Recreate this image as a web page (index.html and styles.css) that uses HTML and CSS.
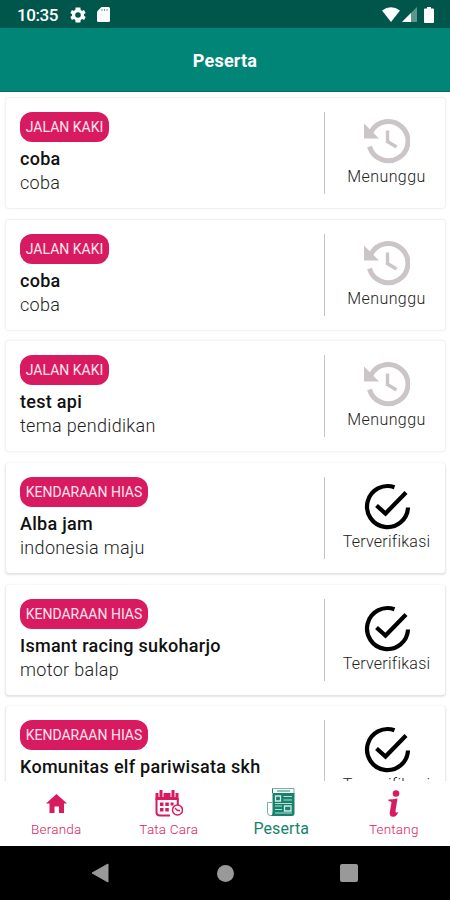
FILE: index.html
```html
<!DOCTYPE html>
<html lang="id">
<head>
<meta charset="utf-8">
<title>Peserta</title>
<link rel="stylesheet" href="styles.css">
</head>
<body>
<svg class="defs" width="0" height="0">
  <symbol id="history" viewBox="0 0 48 48">
    <path d="M9 15A19.600 19.600 0 1 1 7.500 29.500" fill="none" stroke="currentColor" stroke-width="5"/>
    <path d="M2 6.500V21.500H17Z" fill="currentColor"/>
    <path d="M25.500 13.500V24.500L34.500 30" fill="none" stroke="currentColor" stroke-width="3.400"/>
  </symbol>
  <symbol id="verified" viewBox="0 0 48 48">
    <path d="M31.500 4.300A20.500 20.500 0 1 0 45 24.500" fill="none" stroke="currentColor" stroke-width="4.200"/>
    <path d="M13.500 22.500L22.500 30.500L43 9.500" fill="none" stroke="currentColor" stroke-width="4.200"/>
  </symbol>
</svg>
<div class="phone">
  <div class="status">
    <span class="time">10:35</span>
    <svg class="gear" width="16" height="16" viewBox="2 2 20 20"><path fill="#fff" fill-rule="evenodd" d="M19.400 13c.1-.7.1-1.300 0-2l2.100-1.600-2-3.500-2.500 1c-.5-.4-1.100-.7-1.700-1L15 2.500H9l-.4 3.400c-.6.3-1.100.6-1.700 1l-2.500-1-2 3.500L4.600 11c-.1.700-.1 1.300 0 2l-2.200 1.600 2 3.500 2.500-1c.6.400 1.100.7 1.700 1l.4 3.400h6l.4-3.400c.6-.3 1.100-.6 1.700-1l2.500 1 2-3.500zM12 15.500a3.500 3.500 0 1 1 0-7 3.500 3.500 0 0 1 0 7z"/></svg>
    <svg class="sd" width="13" height="15" viewBox="0 0 13 15"><path fill="#fff" d="M4.500 0H11.500Q13 0 13 1.500V13.500Q13 15 11.500 15H1.500Q0 15 0 13.500V4.500Z"/><path d="M5 2v2M7.500 2v2M10 2v2" stroke="#6d9c94" stroke-width="1"/></svg>
    <svg class="wifi" width="18" height="15" viewBox="0 0 18 15"><path fill="#fff" d="M0 3.500Q9-3 18 3.500L9 15Z"/></svg>
    <svg class="signal" width="15" height="15" viewBox="0 0 15 15"><path fill="#5b968c" d="M0 15L15 0V15Z"/><path fill="#fff" d="M0 15L9 6V15Z"/></svg>
    <svg class="battery" width="10" height="16" viewBox="0 0 10 16"><path fill="#fff" d="M3 0H7V1.500H9Q10 1.500 10 2.500V15Q10 16 9 16H1Q0 16 0 15V2.500Q0 1.500 1 1.500H3Z"/></svg>
  </div>
  <header class="bar">Peserta</header>
  <main class="list">
    <article class="card"><div class="info"><span class="tag">JALAN KAKI</span><b class="name">coba</b><span class="desc">coba</span></div><div class="state"><svg class="wait"><use href="#history"/></svg><span>Menunggu</span></div></article>
    <article class="card"><div class="info"><span class="tag">JALAN KAKI</span><b class="name">coba</b><span class="desc">coba</span></div><div class="state"><svg class="wait"><use href="#history"/></svg><span>Menunggu</span></div></article>
    <article class="card"><div class="info"><span class="tag">JALAN KAKI</span><b class="name">test api</b><span class="desc">tema pendidikan</span></div><div class="state"><svg class="wait"><use href="#history"/></svg><span>Menunggu</span></div></article>
    <article class="card low"><div class="info"><span class="tag wide">KENDARAAN HIAS</span><b class="name">Alba jam</b><span class="desc">indonesia maju</span></div><div class="state done"><svg><use href="#verified"/></svg><span>Terverifikasi</span></div></article>
    <article class="card low"><div class="info"><span class="tag wide">KENDARAAN HIAS</span><b class="name">Ismant racing sukoharjo</b><span class="desc">motor balap</span></div><div class="state done"><svg><use href="#verified"/></svg><span>Terverifikasi</span></div></article>
    <article class="card low"><div class="info"><span class="tag wide">KENDARAAN HIAS</span><b class="name">Komunitas elf pariwisata skh</b><span class="desc"></span></div><div class="state done"><svg><use href="#verified"/></svg><span>Terverifikasi</span></div></article>
  </main>
  <nav class="tabs">
    <a class="tab"><svg width="28" height="30" viewBox="0 0 28 30"><path fill="currentColor" d="M14.500 6L25 15.500H22V25H17V18.500H12.500V25H7.500V15.500H4Z"/></svg><span>Beranda</span></a>
    <a class="tab"><svg width="28" height="30" viewBox="0 0 28 30"><path fill="currentColor" d="M0.500 5H23.500V12H0.500Z"/><path d="M1.500 10V24Q1.500 27.500 5 27.500H15M22.800 10V17" fill="none" stroke="currentColor" stroke-width="2"/><path d="M6 3V9M18 3V9" stroke="#fff" stroke-width="5"/><path d="M6 2V9.500M18 2V9.500" stroke="currentColor" stroke-width="3"/><path fill="currentColor" d="M5 14.500h3.500v3.500H5zM10.300 14.500h3.500v3.500h-3.500zM15.600 14.500h3v3h-3zM5 20h3.500v3.500H5zM10.300 20h3.500v3.500h-3.500z"/><circle cx="22.500" cy="22" r="5" fill="#fff" stroke="currentColor" stroke-width="1.500"/><path d="M20 20L22.500 22.500H25" fill="none" stroke="currentColor" stroke-width="1.300"/></svg><span>Tata Cara</span></a>
    <a class="tab active"><svg width="28" height="30" viewBox="0 0 28 30"><path fill="none" stroke="currentColor" stroke-opacity=".6" d="M5 14.500H.5V24Q.5 27.500 3 27.500H8M5.500 .5H27V6"/><path fill="currentColor" d="M5.500 5H27.500V25Q27.500 28 25 28H4Q5.500 27 5.500 24Z"/><path d="M5.500 .5V5M10 3H23" stroke="currentColor"/><path d="M16.500 8.500H25M16.500 12H25M8 18H15M8 21.500H15M8 25H25M8 15.500H25" stroke="#b9dcd3"/><path fill="none" stroke="#d5ebe6" stroke-width="1.300" d="M8.500 8h5v5h-5zM17.500 18h6.500v5h-6.500z"/></svg><span>Peserta</span></a>
    <a class="tab"><svg width="28" height="30" viewBox="0 0 28 30"><circle cx="16" cy="5.500" r="3.300" fill="currentColor"/><path fill="currentColor" d="M8.500 11.500Q12.500 11.500 17.500 10.500L15.500 23Q15.200 25.500 18.500 24Q16.500 29 13 28.800Q9 28.500 9.800 24L11.500 14.500Q11.500 13.200 8.500 13Z"/></svg><span>Tentang</span></a>
  </nav>
  <footer class="system">
    <svg width="18" height="20" viewBox="0 0 18 20"><path d="M17 1V19L1 10Z" fill="#999" stroke="#999" stroke-linejoin="round"/></svg>
    <i class="home"></i><i class="recent"></i>
  </footer>
</div>
</body>
</html>
```
FILE: styles.css
```css
* { box-sizing: border-box; }
body { margin: 0; background: #fff; font-family: Roboto, "Liberation Sans", sans-serif; }
.defs { display: block; }
.phone { width: 450px; height: 900px; display: flex; flex-direction: column; overflow: hidden; }
.status { height: 28px; flex: none; background: #00564b; display: flex; align-items: center; padding: 1px 16px 0 17px; color: #fff; }
.time { font-size: 17px; font-weight: 500; width: 41px; letter-spacing: -.45px; }
.gear { margin-left: 12px; }
.sd { margin-left: 11px; }
.wifi { margin-left: auto; }
.signal { margin-left: 2px; }
.battery { margin-left: 7px; }
.bar { height: 64px; flex: none; background: #018577; border-bottom: 1px solid #00705f; color: #fff; display: flex; align-items: center; justify-content: center; font-size: 18px; font-weight: 700; letter-spacing: .2px; padding-top: 2px; }
.list { flex: 1; min-height: 0; overflow: hidden; padding: 6px 5px 0 6px; display: flex; flex-direction: column; gap: 11.6px; }
.card { flex: none; height: 110.100px; border-radius: 3px; background: #fff; display: flex; padding: 14px 0 0 14px; box-shadow: 0 0 2px 1px rgba(0,0,0,.07); }
.card.low { box-shadow: 0 1px 2px 1px rgba(0,0,0,.11); }
.info { width: 304px; display: flex; flex-direction: column; align-items: flex-start; }
.tag { height: 30px; width: 89px; border-radius: 12px; background: #d81b60; color: #ffe4ee; display: flex; align-items: center; justify-content: center; font-size: 14px; white-space: nowrap; }
.tag.wide { width: 128px; }
.name { font-size: 18px; font-weight: 500; line-height: 24px; margin-top: 5px; letter-spacing: .28px; color: #111; }
.desc { font-size: 18px; font-weight: 300; line-height: 25px; letter-spacing: .33px; color: #222; margin-top: -1px; }
.state { flex: 1; height: 82px; border-left: 1.500px solid #c9c2c4; display: flex; flex-direction: column; align-items: center; padding: 6px 0 0 3px; font-size: 16px; font-weight: 300; line-height: 20px; color: #222; letter-spacing: .4px; }
.state svg { width: 48px; height: 48px; color: #000; margin-bottom: 1px; }
.state .wait { color: #cbc5c7; margin: -1px 1px 2px 0; }
.done { letter-spacing: .25px; }
.tabs { height: 65px; flex: none; display: flex; background: #fff; }
.tab { flex: 1; display: flex; flex-direction: column; align-items: center; padding-top: 7px; color: #d81b60; font-size: 13.500px; line-height: 20px; letter-spacing: .2px; font-weight: 300; }
.tab span { margin-top: 1px; }
.tab.active { color: #16826d; font-size: 16px; font-weight: 400; letter-spacing: .1px; }
.system { height: 54px; flex: none; background: #000; display: flex; align-items: center; padding-left: 91px; }
.home { width: 17px; height: 17px; border-radius: 50%; background: #999; margin-left: 108px; }
.recent { width: 18px; height: 18px; border-radius: 2px; background: #999; margin-left: 106px; }
```
